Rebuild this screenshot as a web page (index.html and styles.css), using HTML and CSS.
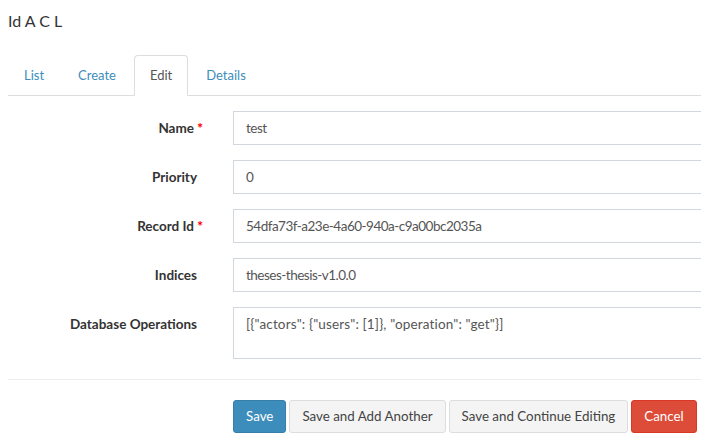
FILE: index.html
```html
<!DOCTYPE html>
<html lang="en">
<head>
<meta charset="utf-8">
<title>Id A C L - Edit</title>
<link rel="stylesheet" href="styles.css">
</head>
<body>
<div class="page">
  <h1 class="title">Id A C L</h1>
  <ul class="tabs">
    <li><a href="#">List</a></li>
    <li><a href="#">Create</a></li>
    <li class="active"><a href="#">Edit</a></li>
    <li><a href="#">Details</a></li>
  </ul>
  <form class="form">
    <div class="row">
      <label class="label">Name <strong class="req">*</strong></label>
      <input class="control" type="text" value="test">
    </div>
    <div class="row">
      <label class="label">Priority</label>
      <input class="control" type="text" value="0">
    </div>
    <div class="row">
      <label class="label">Record Id <strong class="req">*</strong></label>
      <input class="control" type="text" value="54dfa73f-a23e-4a60-940a-c9a00bc2035a">
    </div>
    <div class="row">
      <label class="label">Indices</label>
      <input class="control" type="text" value="theses-thesis-v1.0.0">
    </div>
    <div class="row last">
      <label class="label">Database Operations</label>
      <textarea class="control area">[{"actors": {"users": [1]}, "operation": "get"}]</textarea>
    </div>
    <div class="actions">
      <div></div>
      <div class="buttons">
        <button type="button" class="btn primary">Save</button>
        <button type="button" class="btn">Save and Add Another</button>
        <button type="button" class="btn">Save and Continue Editing</button>
        <button type="button" class="btn danger">Cancel</button>
      </div>
    </div>
  </form>
</div>
</body>
</html>
```
FILE: styles.css
```css
html, body {
  margin: 0;
  padding: 0;
  overflow: hidden;
  background: #fff;
}
body {
  font-family: Lato, "Noto Sans", sans-serif;
  font-size: 13.5px;
  line-height: 20px;
  color: #333;
}
.page {
  width: 780px;
  padding: 0 8px;
}
.title {
  margin: 11px 0 0;
  font-size: 16px;
  font-weight: 400;
  line-height: 20px;
  color: #333;
}
.tabs {
  list-style: none;
  margin: 24px 0 0;
  padding: 0;
  display: flex;
  border-bottom: 1px solid #ddd;
  font-size: 13px;
}
.tabs li {
  margin-bottom: -1px;
}
.tabs a {
  display: block;
  padding: 10px 15px;
  line-height: 19px;
  margin-right: 2px;
  border: 1px solid transparent;
  border-radius: 4px 4px 0 0;
  color: #3c8dbc;
  text-decoration: none;
}
.tabs .active a {
  color: #555;
  background: #fff;
  border-color: #ddd #ddd transparent;
}
.form {
  padding-top: 15px;
}
.row {
  display: grid;
  grid-template-columns: 210px 1fr;
  column-gap: 15px;
  margin-bottom: 15px;
}
.row.last {
  margin-bottom: 0;
}
.label {
  text-align: right;
  font-weight: 700;
  padding: 7px 21px 0 0;
  line-height: 20px;
  color: #333;
}
.req {
  color: red;
  margin-right: -6px;
}
.control {
  display: block;
  box-sizing: border-box;
  width: 100%;
  height: 34px;
  padding: 6px 12px;
  border: 1px solid #d2d6de;
  border-radius: 0;
  font: inherit;
  letter-spacing: -0.5px;
  color: #555;
  background: #fff;
  margin: 0;
}
.area {
  height: 52px;
  resize: none;
  overflow: hidden;
  letter-spacing: 0.15px;
}
.actions {
  display: grid;
  grid-template-columns: 210px 1fr;
  column-gap: 15px;
  margin-top: 20px;
  border-top: 1px solid #eee;
  padding-top: 20px;
}
.buttons {
  display: flex;
  gap: 3px;
}
.btn {
  font: inherit;
  font-size: 13.35px;
  height: 33px;
  padding: 6px 12px;
  line-height: 19px;
  border: 1px solid #ddd;
  border-radius: 3px;
  background: #f4f4f4;
  color: #444;
  margin: 0;
}
.btn.primary {
  background: #3c8dbc;
  border-color: #367fa9;
  color: #fff;
}
.btn.danger {
  background: #dd4b39;
  border-color: #d73925;
  color: #fff;
}
```
